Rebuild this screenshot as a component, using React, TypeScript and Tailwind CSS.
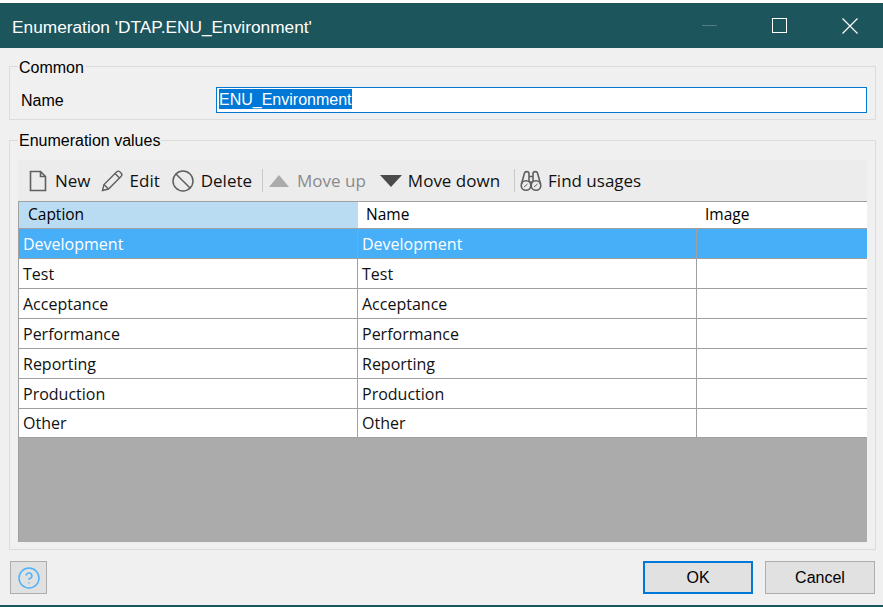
import React from 'react';
import { Ban, CircleHelp } from 'lucide-react';

const rows = ['Development', 'Test', 'Acceptance', 'Performance', 'Reporting', 'Production', 'Other'];

const NewIcon = () => (
  <svg width="18" height="22" viewBox="0 0 18 22" fill="none" stroke="#5f5f5f" strokeWidth="1.6">
    <path d="M1.5 1.5h10l5 5v14h-15z" />
    <path d="M11.5 1.5v5h5" />
  </svg>
);

const EditIcon = () => (
  <svg width="22" height="22" viewBox="0 0 22 22" fill="none" stroke="#5f5f5f" strokeWidth="1.4">
    <path d="M1.5 20.5l1.5-6L15.500 2c1-1 2.500-1 3.500 0l1 1c1 1 1 2.500 0 3.500L7.500 19z" />
    <path d="M3 14.500l4.500 4.500M14 3.500l4.500 4.500" />
  </svg>
);

const Binoculars = () => (
  <svg width="22" height="22" viewBox="0 0 22 22" fill="none" stroke="#5f5f5f" strokeWidth="1.6">
    <path d="M1.500 14L4.500 3c.4-1.800 4-1.800 4.500 0v9M20.500 14L17.500 3c-.4-1.800-4-1.800-4.500 0v9M9 6.500h4M9 12h4" />
    <circle cx="6" cy="15.500" r="4.800" />
    <circle cx="16" cy="15.500" r="4.800" />
    <path d="M4 17l3.500-3M14 17l3.500-3" strokeWidth="1" />
  </svg>
);

const Sep = () => <div className="h-[23px] w-px bg-[#c8c8c8]" />;

export default function App() {
  return (
    <div className="flex h-[607px] w-[883px] flex-col overflow-hidden bg-[#f0f0f0] font-['Open_Sans',sans-serif] text-black">
      <div className="h-[3px] bg-white" />
      <div className="flex h-[45px] items-center bg-[#1d555d] pl-3 font-['Liberation_Sans',sans-serif] text-[17.300px] text-white">
        <span className="flex-1 pt-[5px]">Enumeration 'DTAP.ENU_Environment'</span>
        <div className="flex items-center">
          <div className="mr-[55px] h-px w-[15px] bg-[#4f7f85]" />
          <div className="mr-[55px] h-[15px] w-[15px] border border-white" />
          <svg className="mr-[25px]" width="16" height="16" viewBox="0 0 16 16" stroke="white" strokeWidth="1.200">
            <path d="M.5.5l15 15M15.500.5l-15 15" />
          </svg>
        </div>
      </div>

      <fieldset className="ml-[9px] mr-[7px] mt-[10px] h-[62px] border border-[#dcdcdc] pl-[8px] font-['Liberation_Sans',sans-serif] text-[16px]">
        <legend className="h-[17px] px-px leading-[19px]">Common</legend>
        <div className="flex items-center pt-[11px]">
          <span className="ml-[3px] w-[195px] pt-[3px]">Name</span>
          <div className="flex h-[26px] w-[651px] items-center border border-[#0078d7] bg-white pl-[2px]">
            <span className="mb-[2px] h-[20px] bg-[#0078d7] leading-[22px] text-white">ENU_Environment</span>
          </div>
        </div>
      </fieldset>

      <fieldset className="ml-[9px] mr-[7px] mt-[12px] h-[418px] border border-[#dcdcdc] px-[8px] font-['Liberation_Sans',sans-serif] text-[16px]">
        <legend className="h-[17px] px-px leading-[17px]">Enumeration values</legend>

        <div className="mt-[11px] flex h-[41px] items-center bg-[#ececec] pl-[11px] font-['Open_Sans',sans-serif] text-[17px] text-[#111]">
          <NewIcon />
          <span className="ml-[8px] pt-px">New</span>
          <div className="ml-[10px]"><EditIcon /></div>
          <span className="ml-[7px] pt-px">Edit</span>
          <div className="ml-[11px]"><Ban size={24} color="#5f5f5f" strokeWidth={1.500} /></div>
          <span className="ml-[6px] pt-px">Delete</span>
          <div className="ml-[10px]"><Sep /></div>
          <div className="ml-[6px] h-0 w-0 border-x-[10px] border-b-[12px] border-x-transparent border-b-[#ababab]" />
          <span className="ml-[8px] pt-px text-[#8a8a8a]">Move up</span>
          <div className="ml-[14px] h-0 w-0 border-x-[11px] border-t-[12px] border-x-transparent border-t-[#4a4a4a]" />
          <span className="ml-[6px] pt-px">Move down</span>
          <div className="ml-[14px]"><Sep /></div>
          <div className="ml-[5px]"><Binoculars /></div>
          <span className="ml-[6px] pt-px">Find usages</span>
        </div>

        <div className="flex h-[341px] flex-col border-t border-l border-[#a0a0a0] bg-[#ababab] font-['Open_Sans',sans-serif] text-[16px]">
          <div className="grid h-[27px] shrink-0 grid-cols-[339px_339px_1fr] items-center border-b border-[#a0a0a0] bg-white text-[15.500px]">
            <div className="flex h-full items-center bg-[#badcf3] pb-px pl-[9px]">Caption</div>
            <div className="pb-px pl-[8px]">Name</div>
            <div className="pb-px pl-[8px]">Image</div>
          </div>
          {rows.map((r, i) => (
            <div
              key={r}
              className={
                i === 0
                  ? 'grid h-[30px] shrink-0 grid-cols-[339px_339px_1fr] items-center border-b border-[#a0a0a0] bg-[#47aff8] text-white'
                  : i === rows.length - 1
                    ? 'grid h-[29px] shrink-0 grid-cols-[339px_339px_1fr] items-center border-b border-[#a0a0a0] bg-white text-[#111]'
                    : 'grid h-[30px] shrink-0 grid-cols-[339px_339px_1fr] items-center border-b border-[#a0a0a0] bg-white text-[#111]'
              }
            >
              <div className="flex h-full items-center border-r border-[#a0a0a0] pl-[4px]">{r}</div>
              <div className="flex h-full items-center border-r border-[#a0a0a0] pl-[4px]">{r}</div>
              <div />
            </div>
          ))}
        </div>
      </fieldset>

      <div className="flex items-start pl-[10px] pr-[8px] pt-[11px] font-['Liberation_Sans',sans-serif] text-[16px]">
        <button className="mr-auto flex h-[33px] w-[37px] items-center justify-center border border-[#adadad] bg-[#e1e1e1]">
          <CircleHelp size={24} color="#4db2fb" strokeWidth={1.500} />
        </button>
        <button className="h-[33px] w-[110px] border-2 border-[#0078d7] bg-[#e1e1e1]">OK</button>
        <button className="ml-[12px] h-[33px] w-[110px] border border-[#adadad] bg-[#e1e1e1]">Cancel</button>
      </div>
      <div className="mt-auto h-[2px] bg-[#1d555d]" />
    </div>
  );
}
